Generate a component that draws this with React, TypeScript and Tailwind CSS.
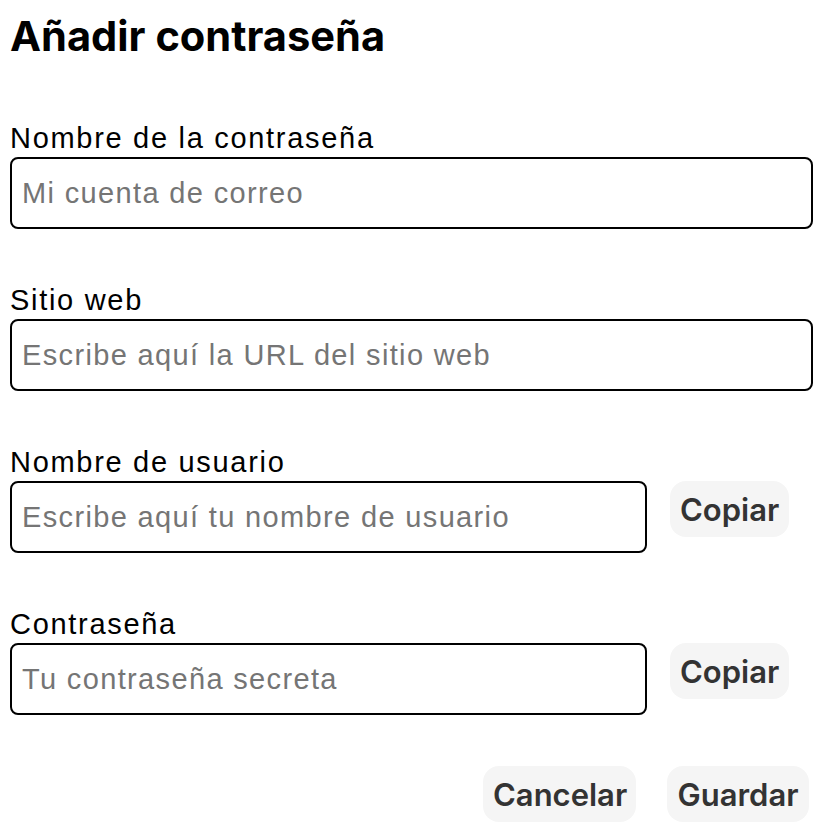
import React from "react";

const label = "block text-[29px] leading-[32px] tracking-[1.7px] text-black mb-[3px]";
const input =
  "h-[72px] border-2 border-black rounded-[8px] px-[10px] text-[29px] tracking-[1.35px] text-black placeholder:text-[#757575] outline-none bg-white";
const btn =
  "h-[56px] rounded-[16px] bg-[#f5f5f5] text-[#333333] text-[31px] font-semibold px-[10px] leading-none";

export default function App() {
  return (
    <div
      className="w-[836px] h-[838px] bg-white px-[10px] pt-[15px]"
      style={{ fontFamily: '"Liberation Sans", Arial, sans-serif' }}
    >
      <h1
        className="text-[41.6px] leading-[42px] font-bold text-black"
        style={{ fontFamily: "Inter, sans-serif" }}
      >
        Añadir contraseña
      </h1>

      <div className="mt-[65px] flex flex-col gap-[55px]">
        <div>
          <label className={label}>Nombre de la contraseña</label>
          <input className={input + " w-[803px]"} placeholder="Mi cuenta de correo" />
        </div>
        <div>
          <label className={label}>Sitio web</label>
          <input className={input + " w-[803px]"} placeholder="Escribe aquí la URL del sitio web" />
        </div>
        <div>
          <label className={label}>Nombre de usuario</label>
          <div className="flex items-start gap-[23px]">
            <input className={input + " w-[637px]"} placeholder="Escribe aquí tu nombre de usuario" />
            <button className={btn + " w-[119px]"} style={{ fontFamily: "Inter, sans-serif" }}>
              Copiar
            </button>
          </div>
        </div>
        <div>
          <label className={label}>Contraseña</label>
          <div className="flex items-start gap-[23px]">
            <input className={input + " w-[637px]"} placeholder="Tu contraseña secreta" />
            <button className={btn + " w-[119px]"} style={{ fontFamily: "Inter, sans-serif" }}>
              Copiar
            </button>
          </div>
        </div>
      </div>

      <div className="mt-[51px] flex justify-end gap-[31px] pr-[17px]">
        <button className={btn + " w-[153px]"} style={{ fontFamily: "Inter, sans-serif" }}>
          Cancelar
        </button>
        <button className={btn + " w-[142px]"} style={{ fontFamily: "Inter, sans-serif" }}>
          Guardar
        </button>
      </div>
    </div>
  );
}
